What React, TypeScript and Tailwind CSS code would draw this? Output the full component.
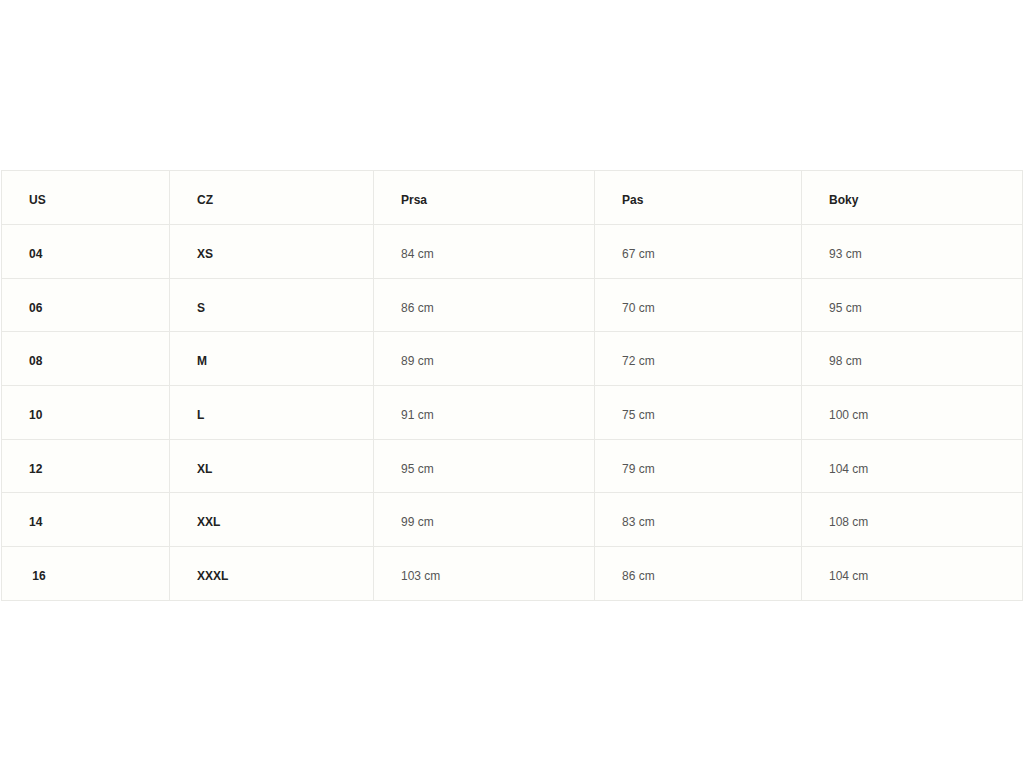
import React from "react";

const header = ["US", "CZ", "Prsa", "Pas", "Boky"];
const rows: string[][] = [
  ["04", "XS", "84 cm", "67 cm", "93 cm"],
  ["06", "S", "86 cm", "70 cm", "95 cm"],
  ["08", "M", "89 cm", "72 cm", "98 cm"],
  ["10", "L", "91 cm", "75 cm", "100 cm"],
  ["12", "XL", "95 cm", "79 cm", "104 cm"],
  ["14", "XXL", "99 cm", "83 cm", "108 cm"],
  ["\u00a016", "XXXL", "103 cm", "86 cm", "104 cm"],
];
const widths = ["w-[168px]", "w-[204px]", "w-[221px]", "w-[207px]", "w-[221px]"];

export default function App() {
  return (
    <div className="min-h-[768px] w-full bg-white pt-[170px] pl-[1px]" style={{ fontFamily: '"Liberation Sans", Arial, sans-serif' }}>
      <table className="w-[1022px] table-fixed border-collapse bg-[#fefefb] text-[12px]">
        <colgroup>
          {widths.map((w, i) => (
            <col key={i} className={w} />
          ))}
        </colgroup>
        <tbody>
          <tr className="h-[54px]">
            {header.map((h, i) => (
              <td key={i} className="border border-[#e9e9e5] pl-[27px] pt-[5px] font-bold text-[#222]">
                {h}
              </td>
            ))}
          </tr>
          {rows.map((r, ri) => (
            <tr key={ri} className="h-[53.7px]">
              {r.map((c, ci) => (
                <td
                  key={ci}
                  className={
                    "border border-[#e9e9e5] pl-[27px] pt-[5px] " +
                    (ci < 2 ? "font-bold text-[#222]" : "text-[#555]")
                  }
                >
                  {c}
                </td>
              ))}
            </tr>
          ))}
        </tbody>
      </table>
    </div>
  );
}
